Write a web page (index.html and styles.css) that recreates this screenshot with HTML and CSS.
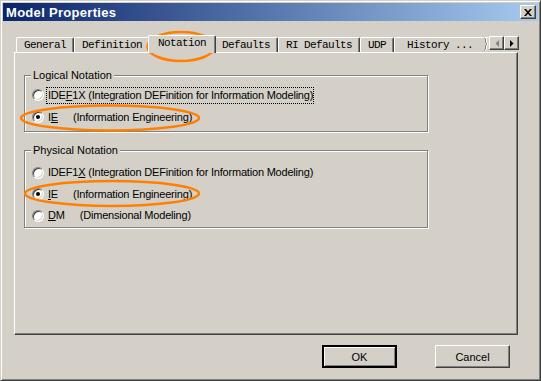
FILE: index.html
```html
<!DOCTYPE html>
<html lang="en">
<head>
    <meta charset="UTF-8">
    <title>Model Properties</title>
    <link rel="stylesheet" href="styles.css">
</head>
<body>

<div class="window">
    <div class="titlebar">
        <span class="title">Model Properties</span>
        <button class="close" aria-label="Close">
            <svg width="8" height="7" viewBox="0 0 8 7"><path d="M0 0h2l2 2.2 2-2.2h2L5 3.5 8 7H6L4 4.8 2 7H0l3-3.5z" fill="#000"/></svg>
        </button>
    </div>

    <div class="content">
        <div class="tabs">
            <div class="tab">General</div>
            <div class="tab">Definition</div>
            <div class="tab active">Notation</div>
            <div class="tab">Defaults</div>
            <div class="tab">RI Defaults</div>
            <div class="tab">UDP</div>
            <div class="tab tab-cut">History ...<svg class="tear" width="6" height="16" viewBox="0 0 6 16"><path d="M1 0.5 2.5 2 2.5 5 4 7 2.5 9 2.5 12 1 14" fill="none" stroke="#808080"/><path d="M2 0.5 3.5 2 3.5 5 5 7 3.5 9 3.5 12 2 14" fill="none" stroke="#fff"/></svg></div>
            <div class="tab-scroll">
                <button class="arrow" disabled>
                    <svg width="4" height="7" viewBox="0 0 4 7"><path d="M4 0v7L0.5 3.5z" fill="#808080"/></svg>
                </button>
                <button class="arrow">
                    <svg width="4" height="7" viewBox="0 0 4 7"><path d="M0 0v7l3.5-3.5z" fill="#000"/></svg>
                </button>
            </div>
        </div>

        <div class="panel">
            <fieldset class="group">
                <legend>Logical Notation</legend>
                <div class="option">
                    <span class="radio"></span>
                    <span class="label focused">IDE<u>F</u>1X (Integration DEFinition for Information Modeling)</span>
                </div>
                <div class="option">
                    <span class="radio checked"></span>
                    <span class="label"><span class="code">I<u>E</u></span>(Information Engineering)</span>
                </div>
            </fieldset>

            <fieldset class="group group-physical">
                <legend>Physical Notation</legend>
                <div class="option">
                    <span class="radio"></span>
                    <span class="label">IDEF1<u>X</u> (Integration DEFinition for Information Modeling)</span>
                </div>
                <div class="option">
                    <span class="radio checked"></span>
                    <span class="label"><span class="code"><u>I</u>E</span>(Information Engineering)</span>
                </div>
                <div class="option">
                    <span class="radio"></span>
                    <span class="label"><span class="code"><u>D</u>M</span>(Dimensional Modeling)</span>
                </div>
            </fieldset>
        </div>

        <div class="buttons">
            <button class="btn default">OK</button>
            <button class="btn">Cancel</button>
        </div>
    </div>

    <!-- hand drawn highlight marks -->
    <svg class="marks" width="541" height="381" viewBox="0 0 541 381">
        <ellipse cx="181" cy="46.5" rx="33.5" ry="14.5"/>
        <ellipse cx="110" cy="118" rx="89" ry="12.5"/>
        <ellipse cx="112" cy="193.5" rx="87" ry="12.5"/>
    </svg>
</div>

</body>
</html>
```

FILE: styles.css
```css
:root {
    --face: #d4d0c8;
    --shadow: #808080;
    --dark: #404040;
    --light: #ffffff;
    --mark: #ff8000;
}

body {
    margin: 0;
    background: var(--face);
    font-family: "Liberation Sans", Arial, sans-serif;
    font-size: 11px;
    color: #000;
}

.window {
    position: relative;
    width: 541px;
    height: 381px;
    box-sizing: border-box;
    padding: 2px;
    background: var(--face);
    border: 1px solid;
    border-color: var(--face) var(--dark) var(--dark) var(--face);
    box-shadow: inset 1px 1px 0 var(--light), inset -1px -1px 0 var(--shadow);
}

.titlebar {
    display: flex;
    align-items: center;
    justify-content: space-between;
    height: 18px;
    padding: 0 2px 0 3px;
    background: linear-gradient(to right, #0a246a, #a6caf0);
}

.title {
    color: #fff;
    font-weight: bold;
    font-size: 13px;
    letter-spacing: 0.3px;
}

.close,
.arrow,
.btn {
    padding: 0;
    margin: 0;
    background: var(--face);
    border: 1px solid;
    border-color: var(--light) var(--dark) var(--dark) var(--light);
    box-shadow: inset -1px -1px 0 var(--shadow);
    display: flex;
    align-items: center;
    justify-content: center;
    box-sizing: border-box;
}

.close {
    width: 16px;
    height: 14px;
}

.content {
    padding: 14px 20px 0 11px;
}

.tabs {
    display: flex;
    align-items: flex-start;
    height: 17px;
    padding-left: 2px;
}

.tab {
    position: relative;
    box-sizing: border-box;
    height: 15px;
    margin-top: 2px;
    padding: 0 7px;
    font-family: "Liberation Mono", "Courier New", monospace;
    font-size: 11px;
    letter-spacing: -0.6px;
    line-height: 14px;
    white-space: nowrap;
    border-top: 1px solid var(--light);
    border-left: 1px solid var(--light);
    border-right: 1px solid var(--dark);
    border-radius: 2px 2px 0 0;
    box-shadow: inset -1px 0 0 var(--shadow);
}

.tab.active {
    z-index: 1;
    height: 18px;
    margin: 0 -2px;
    padding: 0 9px;
    line-height: 15px;
    background: var(--face);
}

.tab-cut {
    padding: 0 16px 0 12px;
    border-right: none;
    box-shadow: none;
}

.tear {
    position: absolute;
    right: 0;
    top: -1px;
}

.tab-scroll {
    display: flex;
    margin: 1px -1px 0 auto;
}

.arrow {
    width: 15px;
    height: 14px;
}

.panel {
    box-sizing: border-box;
    height: 283px;
    padding: 16px 0 0 9px;
    border: 1px solid;
    border-color: var(--light) var(--dark) var(--dark) var(--light);
    box-shadow: inset -1px -1px 0 var(--shadow);
}

.group {
    width: 404px;
    box-sizing: border-box;
    margin: 0;
    padding: 2px 7px 3px;
    border: 1px solid var(--shadow);
    box-shadow: inset 1px 1px 0 var(--light), 1px 1px 0 var(--light);
}

.group-physical {
    margin-top: 12px;
    padding-top: 5px;
    padding-bottom: 0;
}

.group legend {
    padding: 0 2px;
    margin-left: -1px;
    line-height: 13px;
    background: var(--face);
}

.option {
    display: flex;
    align-items: center;
    height: 22px;
}

.group-physical .option {
    height: 21.5px;
}

.radio {
    position: relative;
    width: 12px;
    height: 12px;
    box-sizing: border-box;
    margin-right: 4px;
    border-radius: 50%;
    background: #fff;
    border: 1px solid;
    border-color: var(--shadow) var(--light) var(--light) var(--shadow);
    box-shadow: inset 1px 1px 0 var(--dark), inset -1px -1px 0 var(--face);
}

.radio.checked::after {
    content: "";
    position: absolute;
    left: 3px;
    top: 3px;
    width: 4px;
    height: 4px;
    border-radius: 50%;
    background: #000;
}

.label {
    white-space: nowrap;
    line-height: 13px;
    letter-spacing: -0.2px;
}

.label.focused {
    margin-left: -1px;
    padding: 1px 0 1px 1px;
    outline: 1px dotted #000;
}

.code {
    margin-right: 15px;
}

.buttons {
    display: flex;
    justify-content: flex-end;
    gap: 38px;
    margin-top: 10px;
    padding-right: 8px;
}

.btn {
    width: 75px;
    height: 23px;
    font-family: "Liberation Sans", Arial, sans-serif;
    font-size: 11px;
}

.btn.default {
    outline: 1px solid #000;
    outline-offset: -1px;
    border-width: 2px;
    border-color: #000;
    box-shadow: inset 1px 1px 0 var(--light), inset -1px -1px 0 var(--shadow);
}

.marks {
    position: absolute;
    left: -1px;
    top: -1px;
    pointer-events: none;
}

.marks ellipse {
    fill: none;
    stroke: var(--mark);
    stroke-width: 2.5;
}
```
